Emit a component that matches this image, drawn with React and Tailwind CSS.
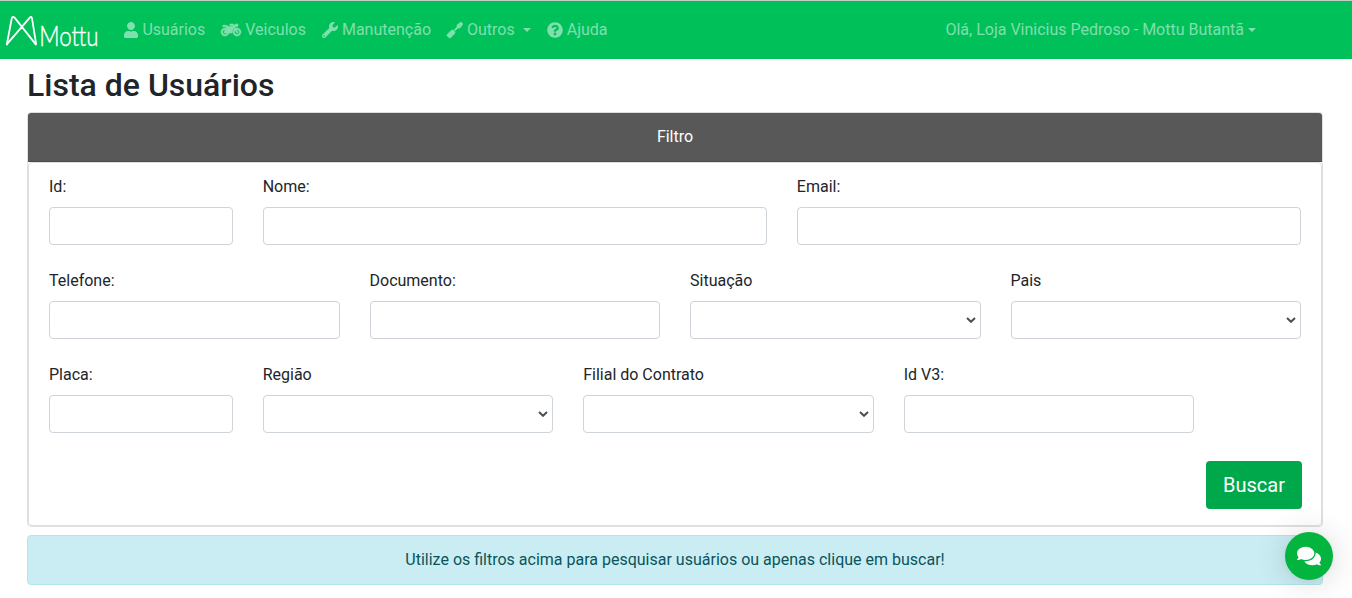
import React from "react";
import {
  FaUser,
  FaMotorcycle,
  FaWrench,
  FaScrewdriver,
  FaQuestionCircle,
  FaComments,
} from "react-icons/fa";

function Caret({ className }) {
  return (
    <span
      className={`inline-block border-x-[4.8px] border-t-[4.8px] border-x-transparent border-t-current ${className}`}
    />
  );
}

function NavItem({ icon: Icon, width, label, caret }) {
  return (
    <a className="flex items-center gap-1 px-2 whitespace-nowrap">
      <Icon className={`h-4 overflow-visible ${width}`} />
      <span>{label}</span>
      {caret && <Caret className="ml-1" />}
    </a>
  );
}

function Logo() {
  return (
    <svg className="h-[56px] w-[96px] shrink-0 overflow-visible" viewBox="4 2 96 56">
      <path
        d="M29.8 17.6 L7.6 43.3 Q6.6 45.6 7 43.5 L11.8 18.2 Q12.8 15.8 14.6 17.6 L35 43.4 Q36.4 45.6 36 43.4 L32 18.2 Q31.4 15.8 29.8 17.6 Z"
        fill="none"
        stroke="#fff"
        strokeWidth="1.8"
        strokeLinecap="round"
        strokeLinejoin="round"
      />
      <text
        x="39.2"
        y="45.5"
        fill="#fff"
        stroke="#fff"
        strokeWidth="0.4"
        textLength="59.3"
        lengthAdjust="spacingAndGlyphs"
        className="font-['Lato',sans-serif] text-[28px] font-light"
      >
        Mottu
      </text>
    </svg>
  );
}

function Field({ label, span, select }) {
  return (
    <div className={`${span} px-[15px]`}>
      <label className="mb-2 block leading-6">{label}</label>
      <div className="flex h-[38px] items-center justify-end rounded border border-[#ced4da] bg-white pr-1">
        {select && (
          <svg className="h-[6px] w-[10px]" viewBox="0 0 10 6">
            <path d="M1 1 L5 4.8 L9 1" fill="none" stroke="#495057" strokeWidth="2" />
          </svg>
        )}
      </div>
    </div>
  );
}

export default function App() {
  return (
    <div className="h-[598px] overflow-hidden bg-white font-['Roboto',sans-serif] text-base text-[#212529]">
      <nav className="flex h-[59px] items-center border-t border-[#c4ccc8] bg-[#00c05a] pl-1 text-white/50">
        <Logo />
        <div className="ml-[16.4px] flex">
          <NavItem icon={FaUser} width="w-[14px]" label="Usuários" />
          <NavItem
            icon={FaMotorcycle}
            width="w-[20px] text-white opacity-50 [stroke-width:20]"
            label="Veiculos"
          />
          <NavItem icon={FaWrench} width="w-4" label="Manutenção" />
          <NavItem
            icon={FaScrewdriver}
            width="w-4 text-white opacity-50 [stroke-width:20]"
            label="Outros"
            caret
          />
          <NavItem icon={FaQuestionCircle} width="w-4" label="Ajuda" />
        </div>
        <a className="mr-24 ml-auto flex items-center gap-1 whitespace-nowrap">
          Olá, Loja Vinicius Pedroso - Mottu Butantã
          <Caret className="" />
        </a>
      </nav>

      <main className="pr-[29px] pl-[27px]">
        <h1 className="mb-2 pt-[7px] text-[32px] leading-[38.4px] font-medium">Lista de Usuários</h1>

        <section className="rounded border border-[#dfdfdf]">
          <header className="flex h-[49px] items-center justify-center rounded-t-[3px] border-b border-[#4b4b4b] bg-[#585858] text-white">
            Filtro
          </header>
          <div className="h-[364px] rounded border border-[#dfdfdf] px-[5px] pt-3">
            <div className="grid grid-cols-12 gap-y-6">
              <Field label="Id:" span="col-span-2" />
              <Field label="Nome:" span="col-span-5" />
              <Field label="Email:" span="col-span-5" />
              <Field label="Telefone:" span="col-span-3" />
              <Field label="Documento:" span="col-span-3" />
              <Field label="Situação" span="col-span-3" select />
              <Field label="Pais" span="col-span-3" select />
              <Field label="Placa:" span="col-span-2" />
              <Field label="Região" span="col-span-3" select />
              <Field label="Filial do Contrato" span="col-span-3" select />
              <Field label="Id V3:" span="col-span-3" />
            </div>
            <div className="mt-7 flex justify-end pr-[14px]">
              <button className="h-12 w-24 rounded bg-[#00a84c] text-xl text-white">Buscar</button>
            </div>
          </div>
        </section>

        <div className="mt-2 flex h-[50px] items-center justify-center rounded border border-[#b2e7ea] bg-[#c9edf3] text-[#0b545c]">
          Utilize os filtros acima para pesquisar usuários ou apenas clique em buscar!
        </div>
      </main>

      <button className="fixed right-[19px] bottom-[18px] flex h-12 w-12 items-center justify-center rounded-full bg-[#03b53e] text-white shadow-[0_1px_6px_rgba(0,0,0,0.06),0_2px_32px_rgba(0,0,0,0.16)]">
        <FaComments className="h-6 w-6" />
      </button>
    </div>
  );
}
